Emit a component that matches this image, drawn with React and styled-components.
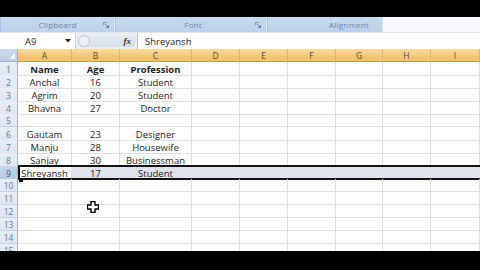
import React from 'react';
import styled, { createGlobalStyle } from 'styled-components';

const GlobalStyle = createGlobalStyle`
  html, body {
    margin: 0;
    padding: 0;
    background: #000;
    overflow: hidden;
  }
  * { box-sizing: border-box; }
`;

const COLUMNS = ['A', 'B', 'C', 'D', 'E', 'F', 'G', 'H', 'I'];
const TEMPLATE = '18px 54px 48px 72px 48px 48px 48px 47px 48px 49px';

const ROWS = [
  ['Name', 'Age', 'Profession'],
  ['Anchal', '16', 'Student'],
  ['Agrim', '20', 'Student'],
  ['Bhavna', '27', 'Doctor'],
  [],
  ['Gautam', '23', 'Designer'],
  ['Manju', '28', 'Housewife'],
  ['Sanjay', '30', 'Businessman'],
  ['Shreyansh', '17', 'Student'],
  [], [], [], [], [], [],
];

const SELECTED_ROW = 9;

const Screen = styled.div`
  width: 480px;
  height: 270px;
  display: flex;
  flex-direction: column;
  background: #000;
  font-family: "Open Sans", "Liberation Sans", sans-serif;
`;

const Letterbox = styled.div`
  height: ${p => p.$h}px;
  flex: none;
  background: #000;
`;

const Ribbon = styled.div`
  height: 16px;
  flex: none;
  display: flex;
  background: #f3f6fb;
  border-bottom: 1px solid #dfe7f1;
`;

const Group = styled.div`
  width: ${p => p.$w}px;
  position: relative;
  display: flex;
  align-items: center;
  justify-content: center;
  padding-left: ${p => p.$shift || 0}px;
  background: linear-gradient(#c6d9ee, #bcd1ea);
  border-right: 1px solid #dce7f4;
  border-left: 1px solid #a9c2e0;
  font-size: 8px;
  color: #6a88b4;
  letter-spacing: 0.2px;
`;

const Launcher = styled.svg`
  position: absolute;
  right: 5px;
  top: 5px;
`;

const RibbonRest = styled.div`
  flex: 1;
  background: #f6f8fc;
`;

const FormulaBar = styled.div`
  height: 16px;
  flex: none;
  display: flex;
  background: #e9eef6;
  font-size: 9.5px;
  color: #1e1e1e;
`;

const NameBox = styled.div`
  width: 76px;
  display: flex;
  align-items: center;
  justify-content: space-between;
  padding: 0 4px 0 25px;
  background: #fff;
  border-right: 1px solid #c4d1e2;
`;

const FxArea = styled.div`
  width: 61px;
  display: flex;
  align-items: center;
  padding: 0 2px;
`;

const FxPill = styled.div`
  flex: 1;
  height: 12px;
  display: flex;
  align-items: center;
  justify-content: space-between;
  padding: 0 4px 0 0;
  border-radius: 6px 0 0 6px;
  background: linear-gradient(#e7ecf3, #d6dee9);
`;

const Knob = styled.span`
  width: 12px;
  height: 12px;
  border-radius: 50%;
  border: 1px solid #b7c4d4;
  background: #eef2f7;
`;

const Fx = styled.span`
  font-family: "Liberation Serif", serif;
  font-style: italic;
  font-weight: bold;
  font-size: 9px;
  color: #333;
`;

const FormulaInput = styled.div`
  flex: 1;
  display: flex;
  align-items: center;
  padding-left: 7px;
  background: #fff;
  border-left: 1px solid #aebed3;
`;

const Sheet = styled.div`
  flex: 1;
  position: relative;
  overflow: hidden;
  background: #fff;
`;

const GridRow = styled.div`
  position: relative;
  display: grid;
  grid-template-columns: ${TEMPLATE};
  height: 13px;
`;

const Corner = styled.div`
  position: relative;
  background: linear-gradient(#cddcee, #b9cde6);
  border-right: 1px solid #9eb6ce;
  border-bottom: 1px solid #9eb6ce;

  &::after {
    content: '';
    position: absolute;
    right: 2px;
    bottom: 2px;
    border-left: 6px solid transparent;
    border-bottom: 6px solid #f2f6fb;
  }
`;

const ColHeader = styled.div`
  display: flex;
  align-items: center;
  justify-content: center;
  padding-top: 1px;
  background: linear-gradient(#f9dca5, #f4c878 55%, #f0c06a);
  border-right: 1px solid #e2b56a;
  border-bottom: 1px solid #c99a4c;
  font-size: 8.5px;
  color: #5e4b29;
`;

const RowHeader = styled.div`
  display: flex;
  align-items: center;
  justify-content: center;
  padding-top: 3px;
  line-height: 1;
  background: ${p => (p.$active
    ? 'linear-gradient(#c4d5ec, #b3c8e4)'
    : 'linear-gradient(#e8eef7, #dde6f2)')};
  border-right: 1px solid #9eb6ce;
  border-bottom: 1px solid #c5d3e4;
  font-size: 8.5px;
  color: ${p => (p.$active ? '#3d5a88' : '#62789a')};
`;

const Cell = styled.div`
  display: flex;
  align-items: center;
  justify-content: center;
  padding-top: 3px;
  line-height: 1;
  white-space: nowrap;
  border-right: 1px solid #dcdfe4;
  border-bottom: 1px solid #dcdfe4;
  background: ${p => (p.$shade ? '#e0e3ec' : 'transparent')};
  font-size: 9.5px;
  font-weight: ${p => (p.$bold ? 700 : 400)};
  color: #1c1c1c;
`;

const Selection = styled.div`
  position: absolute;
  left: 18px;
  right: -2px;
  top: -1px;
  bottom: -1px;
  border: 2px solid #111;
  pointer-events: none;

  &::after {
    content: '';
    position: absolute;
    left: -1px;
    bottom: -4px;
    width: 4px;
    height: 4px;
    background: #111;
  }
`;

const Cursor = styled.svg`
  position: absolute;
  left: 87px;
  top: 152px;
`;

const Caret = () => (
  <svg width="6" height="4" viewBox="0 0 6 4">
    <path d="M0 0 L6 0 L3 3.5 Z" fill="#222" />
  </svg>
);

const DialogLauncher = () => (
  <Launcher width="6" height="6" viewBox="0 0 6 6">
    <path d="M0.5 0.5 H3 M0.5 0.5 V3" stroke="#7d95b8" strokeWidth="1" fill="none" />
    <path d="M2 2 L5.5 5.5 M5.5 3 V5.5 H3" stroke="#5f7aa3" strokeWidth="1" fill="none" />
  </Launcher>
);

const App = () => {
  return (
    <>
      <GlobalStyle />
      <Screen>
        <Letterbox $h={17} />

        <Ribbon>
          <Group $w={115}>
            Clipboard
            <DialogLauncher />
          </Group>
          <Group $w={152} $shift={4}>
            Font
            <DialogLauncher />
          </Group>
          <Group $w={116} $shift={48}>Alignment</Group>
          <RibbonRest />
        </Ribbon>

        <FormulaBar>
          <NameBox>
            <span>A9</span>
            <Caret />
          </NameBox>
          <FxArea>
            <FxPill>
              <Knob />
              <Fx>fx</Fx>
            </FxPill>
          </FxArea>
          <FormulaInput>Shreyansh</FormulaInput>
        </FormulaBar>

        <Sheet>
          <GridRow>
            <Corner />
            {COLUMNS.map(c => <ColHeader key={c}>{c}</ColHeader>)}
          </GridRow>

          {ROWS.map((values, i) => {
            const n = i + 1;
            const selected = n === SELECTED_ROW;
            return (
              <GridRow key={n}>
                <RowHeader $active={selected}>{n}</RowHeader>
                {COLUMNS.map((c, j) => (
                  <Cell key={c} $bold={n === 1} $shade={selected && j > 0}>
                    {values[j] || ''}
                  </Cell>
                ))}
                {selected && <Selection />}
              </GridRow>
            );
          })}

          <Cursor width="12" height="12" viewBox="0 0 12 12">
            <path
              d="M4 0.5 H8 V4 H11.5 V8 H8 V11.5 H4 V8 H0.5 V4 H4 Z"
              fill="#fff"
              stroke="#000"
              strokeWidth="1.4"
            />
          </Cursor>
        </Sheet>

        <Letterbox $h={19} />
      </Screen>
    </>
  );
};

export default App;
